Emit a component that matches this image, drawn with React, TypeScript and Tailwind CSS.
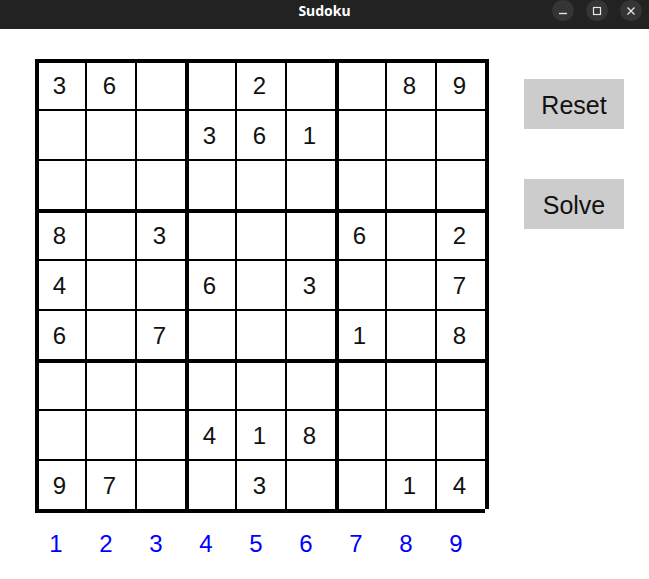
import React from 'react';

const puzzle: number[][] = [
  [3, 6, 0, 0, 2, 0, 0, 8, 9],
  [0, 0, 0, 3, 6, 1, 0, 0, 0],
  [0, 0, 0, 0, 0, 0, 0, 0, 0],
  [8, 0, 3, 0, 0, 0, 6, 0, 2],
  [4, 0, 0, 6, 0, 3, 0, 0, 7],
  [6, 0, 7, 0, 0, 0, 1, 0, 8],
  [0, 0, 0, 0, 0, 0, 0, 0, 0],
  [0, 0, 0, 4, 1, 8, 0, 0, 0],
  [9, 7, 0, 0, 3, 0, 0, 1, 4],
];

// inset shadows draw the left / top grid lines of each cell
function lines(r: number, c: number) {
  const thickL = c % 3 === 0;
  const thickT = r % 3 === 0;
  if (thickL && thickT) return 'shadow-[inset_4px_0_0_0_#000,inset_0_4px_0_0_#000]';
  if (thickL) return 'shadow-[inset_4px_0_0_0_#000,inset_0_2px_0_0_#000]';
  if (thickT) return 'shadow-[inset_2px_0_0_0_#000,inset_0_4px_0_0_#000]';
  return 'shadow-[inset_2px_0_0_0_#000,inset_0_2px_0_0_#000]';
}

function TitleBar() {
  return (
    <div className="h-[29px] bg-[#222222] grid grid-cols-[1fr_auto_1fr] items-start">
      <div />
      <div className="leading-[21px] text-[14px] font-bold text-white font-['Noto_Sans',sans-serif]">
        Sudoku
      </div>
      <div className="flex justify-end gap-[12px] pr-[7px]">
        <div className="w-[22px] h-[21px] rounded-full bg-[#353535] flex items-center justify-center">
          <svg width="10" height="10" viewBox="0 0 10 10">
            <path d="M1 7.5h8" stroke="#e6e6e6" strokeWidth="1.4" />
          </svg>
        </div>
        <div className="w-[22px] h-[21px] rounded-full bg-[#353535] flex items-center justify-center">
          <svg width="10" height="10" viewBox="0 0 10 10">
            <rect x="1.5" y="1.5" width="7" height="7" fill="none" stroke="#e6e6e6" strokeWidth="1.2" />
          </svg>
        </div>
        <div className="w-[22px] h-[21px] rounded-full bg-[#353535] flex items-center justify-center">
          <svg width="10" height="10" viewBox="0 0 10 10">
            <path d="M1.5 1.5l7 7M8.5 1.5l-7 7" stroke="#e6e6e6" strokeWidth="1.3" />
          </svg>
        </div>
      </div>
    </div>
  );
}

function Board() {
  return (
    <div>
      <div className="grid grid-cols-[repeat(9,50px)_4px] grid-rows-[repeat(9,50px)_4px]">
        {puzzle.map((row, r) => (
          <React.Fragment key={r}>
            {row.map((v, c) => (
              <div
                key={c}
                className={`flex items-center justify-center pt-[4px] pr-[1px] text-[24px] text-[#111111] ${lines(r, c)}`}
              >
                {v !== 0 ? v : ''}
              </div>
            ))}
            <div className="bg-black" />
          </React.Fragment>
        ))}
        {Array.from({ length: 9 }).map((_, i) => (
          <div key={i} className="bg-black" />
        ))}
        <div />
      </div>
      <div className="mt-[17px] -ml-[4px] flex">
        {Array.from({ length: 9 }).map((_, i) => (
          <div key={i} className="w-[50px] h-[28px] flex items-center justify-center text-[24px] text-[#0000ff]">
            {i + 1}
          </div>
        ))}
      </div>
    </div>
  );
}

export default function App() {
  return (
    <div className="w-[649px] h-[579px] bg-white overflow-hidden font-['Liberation_Sans',Arial,sans-serif]">
      <TitleBar />
      <div className="flex pl-[35px] pt-[30px]">
        <Board />
        <div className="ml-[35px] mt-[20px] flex flex-col gap-[50px]">
          <button className="w-[100px] h-[50px] pt-[3px] bg-[#cccccc] text-[25px] text-[#111111]">Reset</button>
          <button className="w-[100px] h-[50px] pt-[3px] bg-[#cccccc] text-[25px] text-[#111111]">Solve</button>
        </div>
      </div>
    </div>
  );
}
